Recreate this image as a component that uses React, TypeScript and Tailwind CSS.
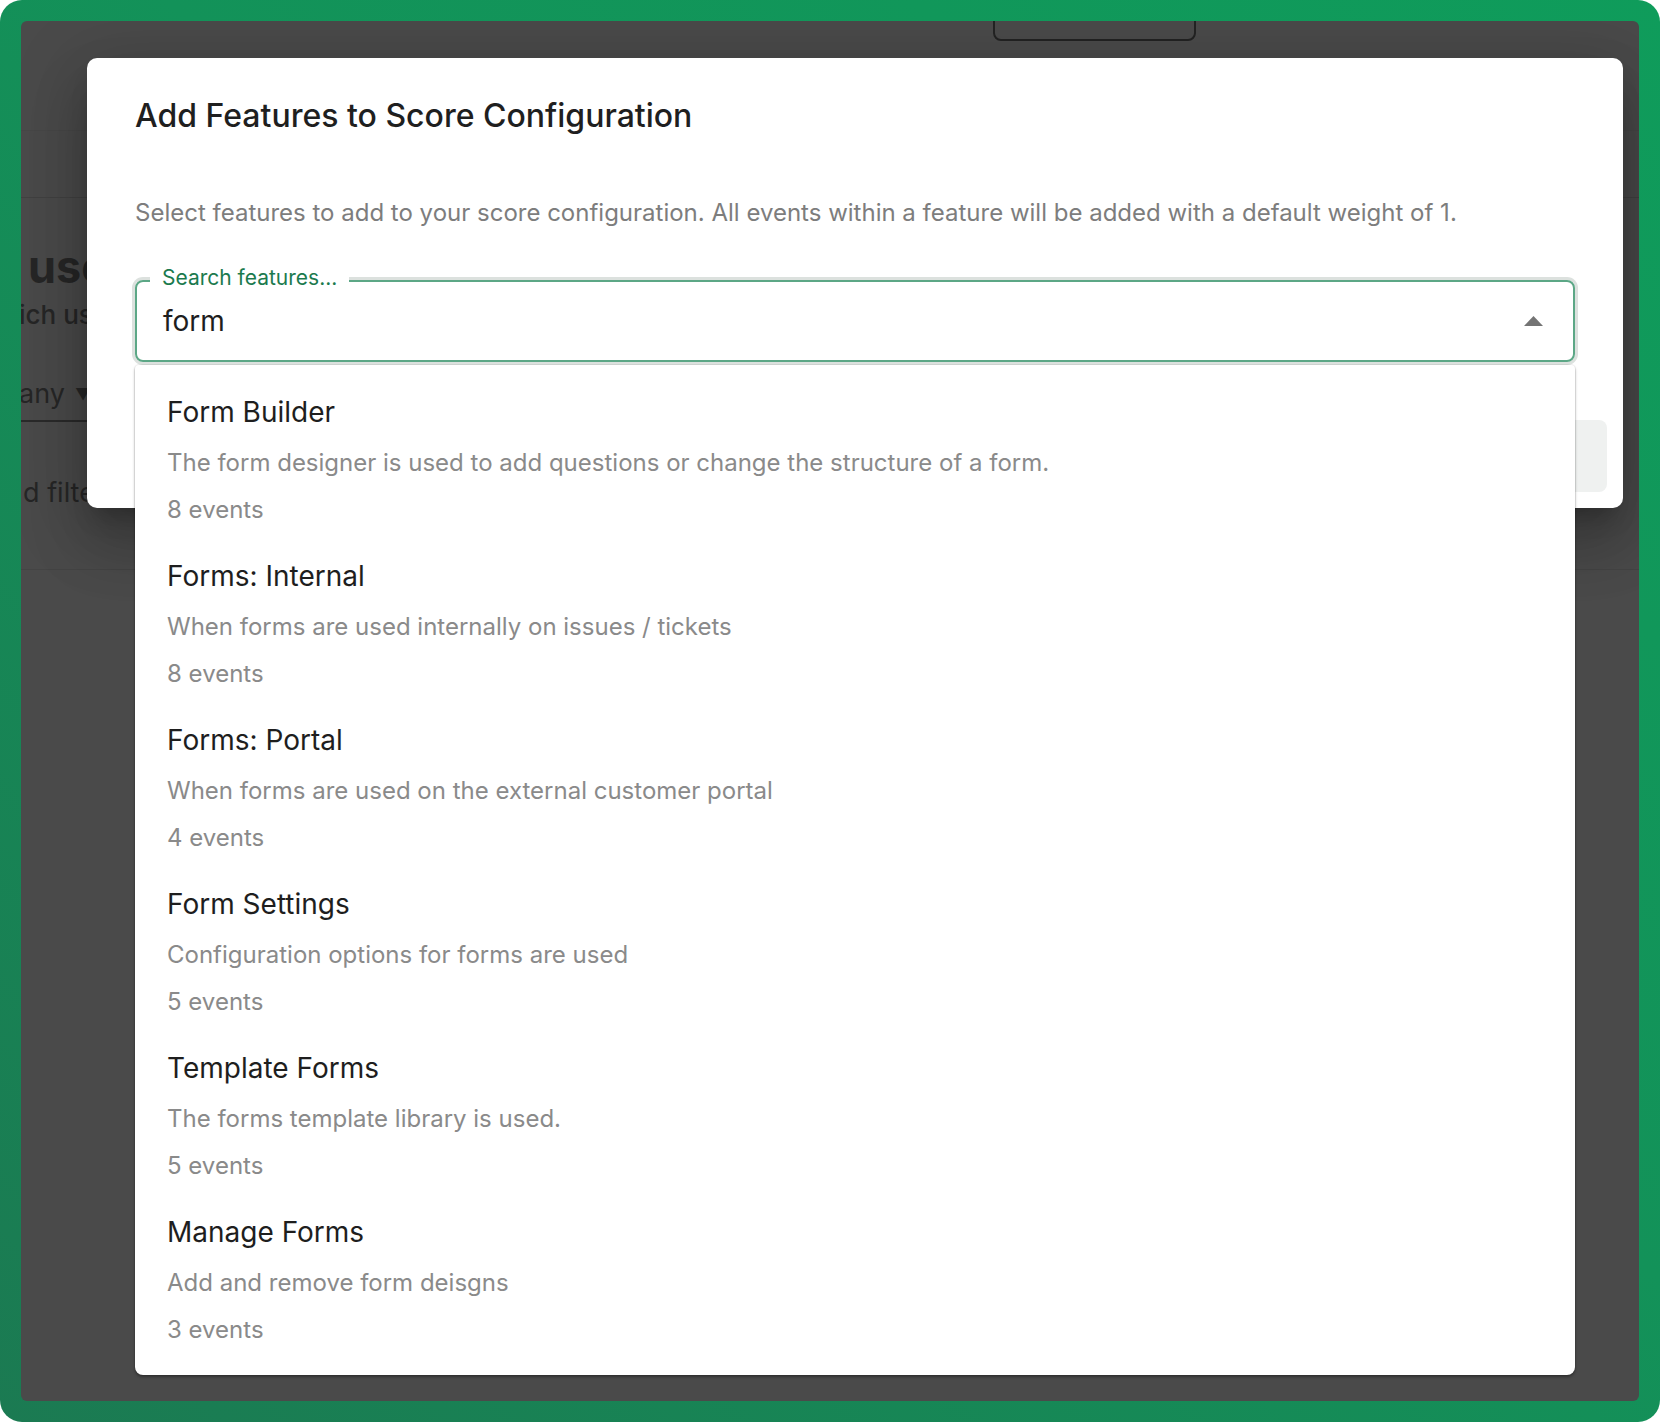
import React from "react";

interface Feature {
  name: string;
  description: string;
  events: number;
}

const features: Feature[] = [
  { name: "Form Builder", description: "The form designer is used to add questions or change the structure of a form.", events: 8 },
  { name: "Forms: Internal", description: "When forms are used internally on issues / tickets", events: 8 },
  { name: "Forms: Portal", description: "When forms are used on the external customer portal", events: 4 },
  { name: "Form Settings", description: "Configuration options for forms are used", events: 5 },
  { name: "Template Forms", description: "The forms template library is used.", events: 5 },
  { name: "Manage Forms", description: "Add and remove form deisgns", events: 3 },
];

const BackgroundPage = () => {
  // the page behind the dialog, already dimmed by the backdrop
  return (
    <div className="flex flex-col text-[#262626]">
      <div className="ml-[972px] -mt-[20px] h-[40px] w-[203px] rounded-[8px] border-2 border-[#232323]" />
      <div className="mt-[89px] h-px w-full bg-[#474747]" />
      <div className="mt-[66px] h-px w-full bg-[#414141]" />
      <div className="mt-[42px] ml-[7px] text-[45px] font-bold leading-[54px]">use</div>
      <div className="mt-[4px] -ml-[2px] text-[26px] font-medium leading-[34px]">ich users</div>
      <div className="mt-[44px] -ml-[2px] flex items-center gap-[10px] text-[27px] leading-[36px]">
        <span>any</span>
        <span className="text-[16px]">▼</span>
      </div>
      <div className="mt-[8px] h-[2px] w-[120px] bg-[#2a2a2a]" />
      <div className="mt-[53px] ml-[2px] text-[27px] leading-[36px]">d filters</div>
      <div className="mt-[58px] h-px w-full bg-[#444444]" />
    </div>
  );
};

const FeatureOption = ({ feature }: { feature: Feature }) => {
  return (
    <li className="flex flex-col px-[32px] py-[16px]">
      <span className="text-[28px] leading-[36px] text-[#1e1e1e]">{feature.name}</span>
      <span className="mt-[16px] text-[24px] leading-[33px] text-[#8a8a8a]">{feature.description}</span>
      <span className="mt-[14px] text-[24px] leading-[33px] text-[#8a8a8a]">{feature.events} events</span>
    </li>
  );
};

const App = () => {
  return (
    <div className="h-[1422px] w-[1660px] bg-white" style={{ fontFamily: "Inter, 'Noto Sans', sans-serif" }}>
      <div className="h-full w-full rounded-[22px] bg-[linear-gradient(to_bottom_left,#0f9c5b,#139259_45%,#1b7a52)] p-[21px]">
        <div className="relative h-full overflow-hidden rounded-[6px] bg-[#4a4a4a]">
          <BackgroundPage />

          <div className="absolute left-[66px] top-[37px] flex w-[1536px] flex-col rounded-[10px] bg-white px-[48px] pb-[16px] pt-[38px] shadow-[0_16px_22px_-10px_rgba(0,0,0,0.25),0_36px_56px_5px_rgba(0,0,0,0.16),0_14px_70px_12px_rgba(0,0,0,0.14)]">
            <h2 className="text-[32px] font-medium leading-[40px] text-[#1f1f1f]">Add Features to Score Configuration</h2>
            <p className="mt-[60px] text-[24px] leading-[34px] text-[#7d7d7d]">
              Select features to add to your score configuration. All events within a feature will be added with a default weight of 1.
            </p>

            <div className="relative z-10 mt-[50px]">
              <div className="flex h-[82px] items-center rounded-[8px] border-2 border-[#5ca786] pl-[26px] pr-[30px] shadow-[0_0_0_3px_#dce1de]">
                <span className="flex-1 text-[28px] leading-[36px] text-[#1e1e1e]">form</span>
                <svg width="19" height="10" viewBox="0 0 19 10">
                  <polygon points="0,10 9.5,0 19,10" fill="#747474" />
                </svg>
              </div>
              <span className="absolute -top-[15px] left-[15px] bg-white px-[12px] text-[21px] leading-[26px] text-[#1b7a4e]">
                Search features...
              </span>

              <ul className="absolute left-0 right-0 top-[85px] rounded-b-[8px] rounded-t-[4px] bg-white py-[13px] shadow-[0_2px_3px_rgba(0,0,0,0.35),0_0_0_1px_rgba(0,0,0,0.05)]">
                {features.map((feature, index) => (
                  <FeatureOption key={index} feature={feature} />
                ))}
              </ul>
            </div>

            <div className="-mr-[32px] mt-[58px] flex justify-end">
              <div className="h-[72px] w-[260px] rounded-[8px] bg-[#eff1f0]" />
            </div>
          </div>
        </div>
      </div>
    </div>
  );
};

export default App;
